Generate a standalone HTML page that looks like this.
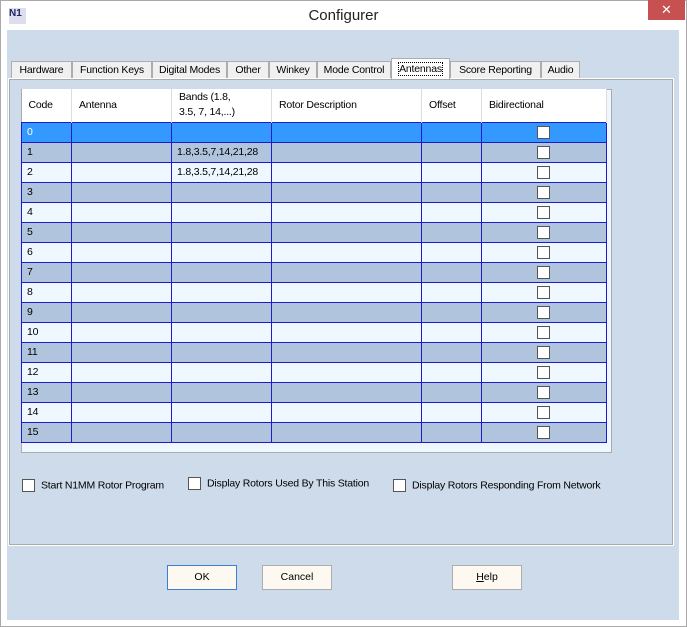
<html><head><style>
body{margin:0;width:687px;height:627px;background:#fff;font-family:"Liberation Sans",sans-serif;font-size:11px;color:#000;position:relative;overflow:hidden}
.a{position:absolute}
.win{left:0;top:0;width:685px;height:625px;border:1px solid #aaa;background:#fff}
.client{left:7px;top:30px;width:672px;height:590px;background:#cddbea}
.tab{position:absolute;top:61px;height:17px;background:#f0f0f0;border:1px solid #adadad;border-bottom:none;font-size:10.5px;letter-spacing:-0.2px;line-height:17px;text-align:center;box-sizing:border-box}
.panel{left:8px;top:78px;width:666px;height:468px;border:1px solid #fff;box-shadow:inset 0 0 0 1px #aaa;background:#cddbea;box-sizing:border-box}
table{border-collapse:collapse;position:absolute;left:21px;top:89px;table-layout:fixed}
td{border:1px solid #1c1ccc;height:20px;padding:0 0 0 5px;font-size:10.5px;letter-spacing:-0.2px;box-sizing:border-box}
tr.h td{border:none;border-right:1px solid #ddd;height:33px;background:#fff;padding-left:7px}
tr.w td{background:#f0f8ff}
tr.g td{background:#b0c4de}
tr.s td{background:#3399ff;color:#fff}
.cb{display:inline-block;width:11px;height:11px;background:#fff;border:1px solid #555;vertical-align:middle}
.lbl{font-size:10.5px;letter-spacing:-0.2px}
.btn{position:absolute;top:565px;height:25px;width:70px;background:#fdf9f1;border:1px solid #adadad;box-sizing:border-box;text-align:center;line-height:23px;font-size:10.5px}
</style></head><body>
<div class="a win"></div>
<div class="a" style="left:9px;top:8px;width:17px;height:16px;background:#dde;color:#226;font-size:10px;font-weight:bold;line-height:12px">N1</div>
<div class="a" style="left:0;width:687px;top:7px;text-align:center;font-size:15px;color:#222">Configurer</div>
<div class="a" style="left:648px;top:0;width:37px;height:20px;background:#c75050;color:#fff;text-align:center;line-height:20px;font-size:13px">✕</div>
<div class="a client"></div>
<div class="a panel"></div>
<div class="tab" style="left:11px;width:61px">Hardware</div>
<div class="tab" style="left:72px;width:80px">Function Keys</div>
<div class="tab" style="left:152px;width:75px">Digital Modes</div>
<div class="tab" style="left:227px;width:42px">Other</div>
<div class="tab" style="left:269px;width:48px">Winkey</div>
<div class="tab" style="left:317px;width:74px">Mode Control</div>
<div class="tab" style="left:391px;width:59px;top:58px;height:21px;background:#fff;line-height:20px"><span style="outline:1px dotted #000">Antennas</span></div>
<div class="tab" style="left:450px;width:91px">Score Reporting</div>
<div class="tab" style="left:541px;width:39px">Audio</div>
<div class="a" style="left:21px;top:89px;width:591px;height:364px;background:#f0f8ff;border:1px solid #aaa;box-sizing:border-box"></div>
<table>
<colgroup><col style="width:50px"><col style="width:100px"><col style="width:100px"><col style="width:150px"><col style="width:60px"><col style="width:125px"></colgroup>
<tr class="h"><td>Code</td><td>Antenna</td><td style="line-height:15px">Bands (1.8,<br>3.5, 7, 14,...)</td><td>Rotor Description</td><td>Offset</td><td>Bidirectional</td></tr>
<tr class="s"><td>0</td><td></td><td></td><td></td><td></td><td style="padding-left:55px"><span class="cb"></span></td></tr>
<tr class="g"><td>1</td><td></td><td>1.8,3.5,7,14,21,28</td><td></td><td></td><td style="padding-left:55px"><span class="cb"></span></td></tr>
<tr class="w"><td>2</td><td></td><td>1.8,3.5,7,14,21,28</td><td></td><td></td><td style="padding-left:55px"><span class="cb"></span></td></tr>
<tr class="g"><td>3</td><td></td><td></td><td></td><td></td><td style="padding-left:55px"><span class="cb"></span></td></tr>
<tr class="w"><td>4</td><td></td><td></td><td></td><td></td><td style="padding-left:55px"><span class="cb"></span></td></tr>
<tr class="g"><td>5</td><td></td><td></td><td></td><td></td><td style="padding-left:55px"><span class="cb"></span></td></tr>
<tr class="w"><td>6</td><td></td><td></td><td></td><td></td><td style="padding-left:55px"><span class="cb"></span></td></tr>
<tr class="g"><td>7</td><td></td><td></td><td></td><td></td><td style="padding-left:55px"><span class="cb"></span></td></tr>
<tr class="w"><td>8</td><td></td><td></td><td></td><td></td><td style="padding-left:55px"><span class="cb"></span></td></tr>
<tr class="g"><td>9</td><td></td><td></td><td></td><td></td><td style="padding-left:55px"><span class="cb"></span></td></tr>
<tr class="w"><td>10</td><td></td><td></td><td></td><td></td><td style="padding-left:55px"><span class="cb"></span></td></tr>
<tr class="g"><td>11</td><td></td><td></td><td></td><td></td><td style="padding-left:55px"><span class="cb"></span></td></tr>
<tr class="w"><td>12</td><td></td><td></td><td></td><td></td><td style="padding-left:55px"><span class="cb"></span></td></tr>
<tr class="g"><td>13</td><td></td><td></td><td></td><td></td><td style="padding-left:55px"><span class="cb"></span></td></tr>
<tr class="w"><td>14</td><td></td><td></td><td></td><td></td><td style="padding-left:55px"><span class="cb"></span></td></tr>
<tr class="g"><td>15</td><td></td><td></td><td></td><td></td><td style="padding-left:55px"><span class="cb"></span></td></tr>
</table>
<div class="a lbl" style="left:22px;top:479px"><span class="cb" style="margin-right:6px"></span>Start N1MM Rotor Program</div>
<div class="a lbl" style="left:188px;top:477px"><span class="cb" style="margin-right:6px"></span>Display Rotors Used By This Station</div>
<div class="a lbl" style="left:393px;top:479px"><span class="cb" style="margin-right:6px"></span>Display Rotors Responding From Network</div>
<div class="btn" style="left:167px;border-color:#3c7fd1">OK</div>
<div class="btn" style="left:262px">Cancel</div>
<div class="btn" style="left:452px"><u>H</u>elp</div>
</body></html>
